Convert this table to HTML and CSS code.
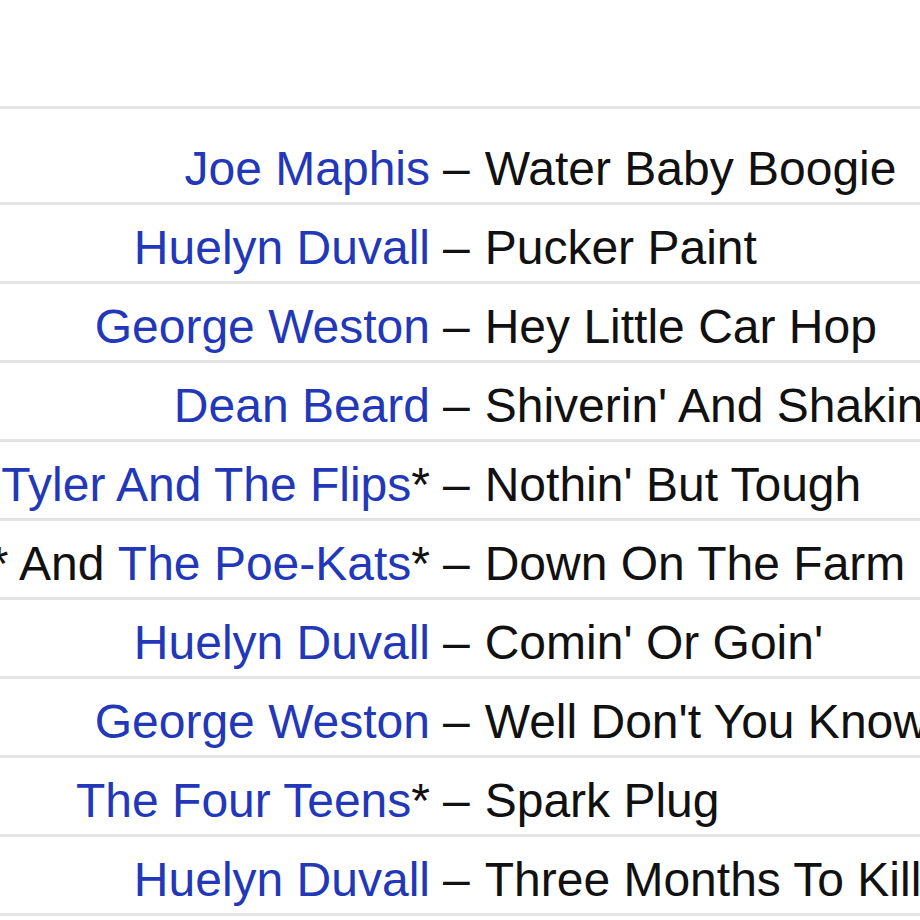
FILE: index.html
```html
<!DOCTYPE html>
<html>
<head>
<meta charset="utf-8">
<link rel="stylesheet" href="styles.css">
</head>
<body>
<div class="tracklist">
  <div class="track first">
    <div class="artists"><a class="artist" href="#">Joe Maphis</a></div>
    <span class="sep">–</span>
    <span class="title">Water Baby Boogie</span>
  </div>
  <div class="track">
    <div class="artists"><a class="artist" href="#">Huelyn Duvall</a></div>
    <span class="sep">–</span>
    <span class="title">Pucker Paint</span>
  </div>
  <div class="track">
    <div class="artists"><a class="artist" href="#">George Weston</a></div>
    <span class="sep">–</span>
    <span class="title">Hey Little Car Hop</span>
  </div>
  <div class="track">
    <div class="artists"><a class="artist" href="#">Dean Beard</a></div>
    <span class="sep">–</span>
    <span class="title">Shiverin' And Shakin'</span>
  </div>
  <div class="track">
    <div class="artists"><a class="artist" href="#">Tyler And The Flips</a>*</div>
    <span class="sep">–</span>
    <span class="title">Nothin' But Tough</span>
  </div>
  <div class="track">
    <div class="artists">* And <a class="artist" href="#">The Poe-Kats</a>*</div>
    <span class="sep">–</span>
    <span class="title">Down On The Farm</span>
  </div>
  <div class="track">
    <div class="artists"><a class="artist" href="#">Huelyn Duvall</a></div>
    <span class="sep">–</span>
    <span class="title">Comin' Or Goin'</span>
  </div>
  <div class="track">
    <div class="artists"><a class="artist" href="#">George Weston</a></div>
    <span class="sep">–</span>
    <span class="title">Well Don't You Know</span>
  </div>
  <div class="track">
    <div class="artists"><a class="artist" href="#">The Four Teens</a>*</div>
    <span class="sep">–</span>
    <span class="title">Spark Plug</span>
  </div>
  <div class="track last">
    <div class="artists"><a class="artist" href="#">Huelyn Duvall</a></div>
    <span class="sep">–</span>
    <span class="title">Three Months To Kill</span>
  </div>
</div>
</body>
</html>
```
FILE: styles.css
```css
html, body {
  margin: 0;
  padding: 0;
  background: #ffffff;
  overflow: hidden;
}

body {
  font-family: "Liberation Sans", Arial, sans-serif;
  font-size: 48px;
  color: #111111;
}

.tracklist {
  padding-top: 106px;
  width: 1200px;
}

.track {
  display: flex;
  align-items: baseline;
  white-space: nowrap;
  border-top: 3px solid #e4e4e4;
  padding: 15px 0 6px;
  line-height: 55px;
}

.track.first {
  padding-top: 32px;
}

.track.last {
  border-bottom: 3px solid #e4e4e4;
}

.artists {
  width: 430px;
  flex: none;
  display: flex;
  justify-content: flex-end;
  white-space: pre;
}

.artist {
  color: #2238b8;
  text-decoration: none;
}

.sep {
  margin: 0 15px 0 13px;
}

.title {
  color: #111111;
}
```
